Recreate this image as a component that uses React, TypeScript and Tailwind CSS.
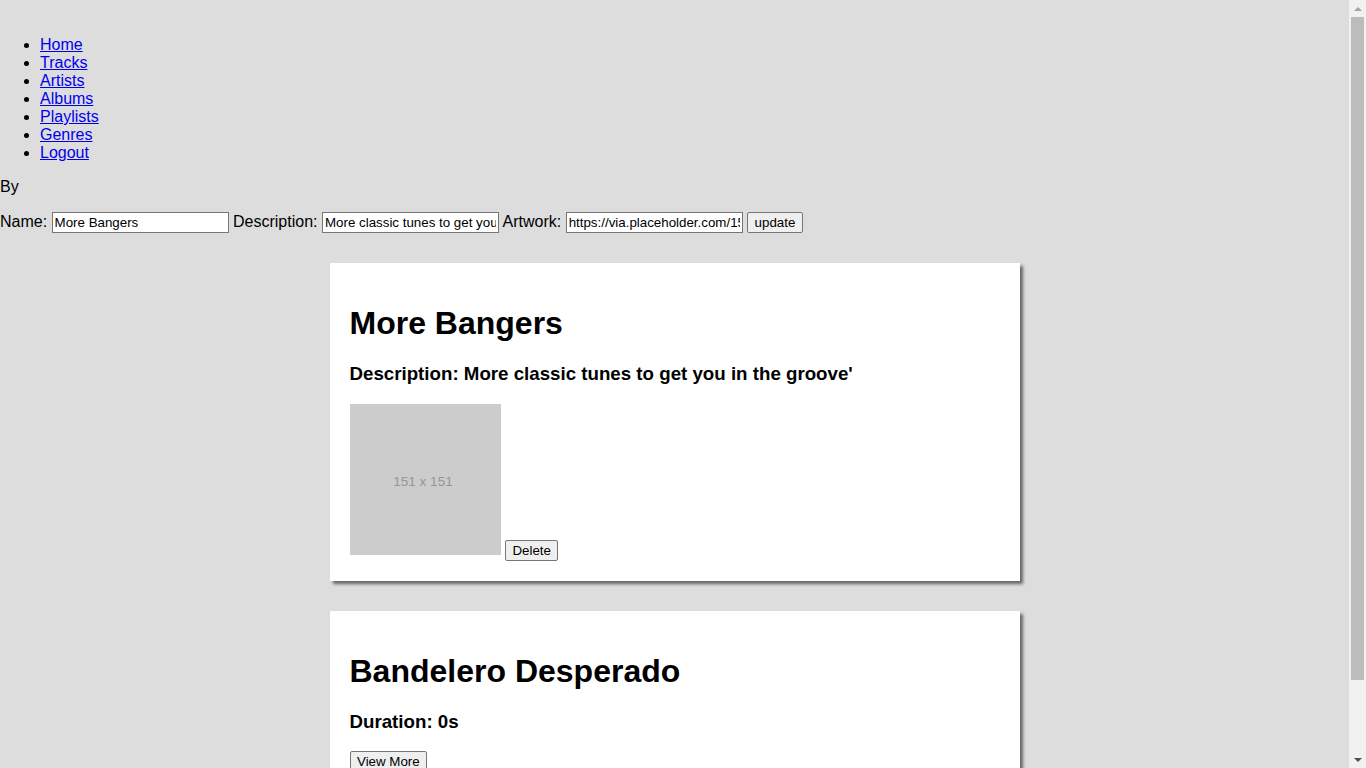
import React from "react";

const links = ["Home", "Tracks", "Artists", "Albums", "Playlists", "Genres", "Logout"];

const inputCls =
    "w-[177px] h-[21px] px-[2px] py-[1px] border border-[#767676] bg-white text-[13.33px] text-black align-middle outline-none";
const buttonCls =
    "h-[21px] px-[6.5px] border border-[#767676] rounded-[2px] bg-[#efefef] text-[13.33px] text-black leading-[17px] align-baseline";

function Card(props: { children: React.ReactNode }) {
    return (
        <div className="w-[690px] mx-auto mb-[30px] p-[20px] bg-white shadow-[3px_3px_3px_#666]">
            {props.children}
        </div>
    );
}

function Placeholder() {
    return (
        <svg width="151" height="151" className="inline align-baseline">
            <rect width="151" height="151" fill="#cccccc" />
            <text x="73" y="82" textAnchor="middle" fill="#969696" fontSize="13.5" fontFamily="Liberation Sans, Arial, sans-serif">
                151 x 151
            </text>
        </svg>
    );
}

function Scrollbar() {
    return (
        <div className="w-[17px] h-screen shrink-0 bg-[#f1f1f1] flex flex-col items-center">
            <div className="h-[17px] flex items-center justify-center">
                <div className="w-0 h-0 border-l-[4px] border-r-[4px] border-b-[4px] border-l-transparent border-r-transparent border-b-[#a3a3a3]" />
            </div>
            <div className="w-[13px] h-[663px] bg-[#bcbcbc]" />
            <div className="flex-1" />
            <div className="h-[17px] flex items-center justify-center">
                <div className="w-0 h-0 border-l-[4px] border-r-[4px] border-t-[4px] border-l-transparent border-r-transparent border-t-[#505050]" />
            </div>
        </div>
    );
}

export default function App() {
    return (
        <div className="flex h-screen overflow-hidden bg-[#dddddd] text-black text-[16px]" style={{fontFamily: '"Liberation Sans", Arial, sans-serif'}}>
            <div className="flex-1 min-w-0 pt-[20px] pb-[22px]">
                <ul className="list-disc pl-[40px] my-[16px] leading-[18px]">
                    {links.map(l => (
                        <li key={l}>
                            <a href="#" className="text-[#0000ee] underline">{l}</a>
                        </li>
                    ))}
                </ul>
                <p className="my-[16px] leading-[18px]">By</p>
                <form className="mt-[16px] mb-[30px] leading-[18px]" onSubmit={e => e.preventDefault()}>
                    <label>Name: </label>
                    <input className={inputCls} defaultValue="More Bangers" />{" "}
                    <label>Description: </label>
                    <input className={inputCls} defaultValue="More classic tunes to get you in the groove'" />{" "}
                    <label>Artwork: </label>
                    <input className={inputCls} defaultValue="https://via.placeholder.com/151" />{" "}
                    <button className={buttonCls}>update</button>
                </form>

                <Card>
                    <h1 className="text-[32px] font-bold my-[21.44px] leading-[37px]">More Bangers</h1>
                    <h3 className="text-[18.72px] font-bold my-[18.72px] leading-[21.5px]">
                        Description: More classic tunes to get you in the groove'
                    </h3>
                    <div className="leading-[18px] pt-[1px]">
                        <Placeholder />{" "}
                        <button className={buttonCls}>Delete</button>
                    </div>
                </Card>

                <Card>
                    <h1 className="text-[32px] font-bold my-[21.44px] leading-[37px]">Bandelero Desperado</h1>
                    <h3 className="text-[18.72px] font-bold my-[18.72px] leading-[21.5px]">Duration: 0s</h3>
                    <div className="leading-[18px]">
                        <button className={buttonCls}>View More</button>
                    </div>
                </Card>
            </div>
            <Scrollbar />
        </div>
    );
}
